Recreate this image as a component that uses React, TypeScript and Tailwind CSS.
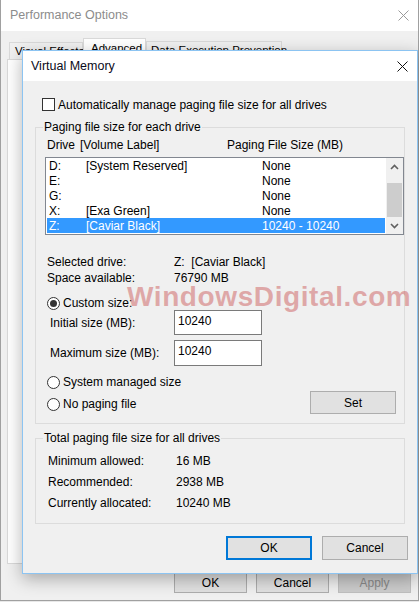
import React from "react";

const F = { fontFamily: '"Liberation Sans", Arial, sans-serif' };

function XIcon({ color }: { color: string }) {
  return (
    <svg width="11" height="11" viewBox="0 0 11 11">
      <path d="M0.5 0.5 L10.5 10.5 M10.5 0.5 L0.5 10.5" stroke={color} strokeWidth="1" fill="none" />
    </svg>
  );
}

function Radio({ checked }: { checked?: boolean }) {
  return (
    <span className="w-[13px] h-[13px] rounded-full border border-[#333] bg-white flex items-center justify-center shrink-0">
      {checked && <span className="w-[7px] h-[7px] rounded-full bg-[#333]" />}
    </span>
  );
}

function Chevron({ up }: { up?: boolean }) {
  return (
    <svg width="9" height="6" viewBox="0 0 9 6">
      <path d={up ? "M1 5 L4.5 1.5 L8 5" : "M1 1 L4.5 4.5 L8 1"} stroke="#606060" strokeWidth="1.6" fill="none" />
    </svg>
  );
}

const rows = [
  { d: "D:", l: "[System Reserved]", s: "None" },
  { d: "E:", l: "", s: "None" },
  { d: "G:", l: "", s: "None" },
  { d: "X:", l: "[Exa Green]", s: "None" },
  { d: "Z:", l: "[Caviar Black]", s: "10240 - 10240", sel: true },
];

export default function App() {
  return (
    <div className="relative w-[419px] h-[602px] overflow-hidden bg-[#e8e8e8] text-[12px] text-black" style={F}>
      {/* Outer window */}
      <div className="w-[419px] h-[601px] border-l border-r border-b border-[#a0a0a0] bg-[#f0f0f0] flex flex-col">
        <div className="h-[31px] bg-white flex items-center justify-between pl-[9px] pr-[9px] shrink-0">
          <span className="text-[#8c8c8c] text-[12.5px]">Performance Options</span>
          <XIcon color="#9a9a9a" />
        </div>
        <div className="flex items-end pl-[8px] pt-[7px] h-[28px] shrink-0 whitespace-nowrap text-[11.5px]">
          <div className="h-[17px] w-[74px] border border-b-0 border-[#d9d9d9] bg-[#f0f0f0] pl-[5px] leading-[16px]">Visual Effects</div>
          <div className="h-[21px] w-[63px] border border-b-0 border-[#d9d9d9] bg-white pl-[7px] leading-[18px]">Advanced</div>
          <div className="h-[18px] w-[136px] border border-b-0 border-[#d9d9d9] bg-[#f0f0f0] pl-[4px] leading-[16px]">Data Execution Prevention</div>
        </div>
        <div className="ml-[6px] mr-[6px] h-[505px] border border-[#d9d9d9] bg-white shrink-0" />
        <div className="flex justify-end gap-[9px] pr-[7px] mt-[8px]">
          <div className="w-[73px] h-[21px] border border-[#adadad] bg-[#e1e1e1] flex items-center justify-center">OK</div>
          <div className="w-[73px] h-[21px] border border-[#adadad] bg-[#e1e1e1] flex items-center justify-center">Cancel</div>
          <div className="w-[73px] h-[21px] border border-[#bfbfbf] bg-[#cccccc] text-[#8a8a8a] flex items-center justify-center">Apply</div>
        </div>
      </div>

      {/* Virtual Memory dialog */}
      <div className="absolute left-[22px] top-[50px] w-[396px] h-[524px] border border-[#8cc4f2] bg-[#f0f0f0] flex flex-col shadow-[0_5px_16px_rgba(0,0,0,0.3)]">
        <div className="h-[30px] bg-white flex items-center justify-between pl-[8px] pr-[9px] shrink-0">
          <span className="text-[12.5px] text-[#0a0a20]">Virtual Memory</span>
          <XIcon color="#111" />
        </div>
        <div className="px-[12px] flex flex-col">
          <div className="flex items-center mt-[17px] ml-[7px] h-[13px]">
            <span className="w-[13px] h-[13px] border border-[#333] bg-white shrink-0" />
            <span className="ml-[3px] leading-[14px]">Automatically manage paging file size for all drives</span>
          </div>

          {/* Group 1 */}
          <div className="mt-[16px] border border-[#dcdcdc] flex flex-col h-[297px]">
            <div className="-mt-[9px] ml-[7px] w-fit px-[1px] bg-[#f0f0f0] leading-[16px]">Paging file size for each drive</div>
            <div className="flex mt-[2px] pl-[11px] leading-[16px]">
              <span className="w-[33px]">Drive</span>
              <span className="w-[147px]">[Volume Label]</span>
              <span>Paging File Size (MB)</span>
            </div>
            <div className="mt-[4px] ml-[9px] w-[359px] h-[78px] border border-[#828790] bg-white flex">
              <div className="flex-1 pl-[1px] flex flex-col">
                {rows.map((r) => (
                  <div
                    key={r.d}
                    className={`h-[15px] flex items-center pl-[2px] ${r.sel ? "bg-[#3399ff] text-white" : ""}`}
                  >
                    <span className="w-[37px]">{r.d}</span>
                    <span className="w-[176px]">{r.l}</span>
                    <span>{r.s}</span>
                  </div>
                ))}
              </div>
              <div className="w-[17px] ml-[1px] bg-[#f0f0f0] flex flex-col">
                <div className="h-[17px] flex items-center justify-center"><Chevron up /></div>
                <div className="flex-1" />
                <div className="h-[34px] mx-[1px] bg-[#cdcdcd]" />
                <div className="h-[17px] flex items-center justify-center"><Chevron /></div>
              </div>
            </div>

            <div className="flex mt-[19px] pl-[11px] leading-[16px]">
              <span className="w-[127px]">Selected drive:</span>
              <span>Z:&nbsp;&nbsp;[Caviar Black]</span>
            </div>
            <div className="flex pl-[11px] leading-[16px]">
              <span className="w-[127px]">Space available:</span>
              <span>76790 MB</span>
            </div>
            <div className="flex items-center mt-[10px] pl-[11px] h-[14px]">
              <Radio checked />
              <span className="ml-[3px]">Custom size:</span>
            </div>
            <div className="flex items-center pl-[14px] h-[25px]">
              <span className="w-[124px]">Initial size (MB):</span>
              <div className="w-[88px] h-[25px] border border-[#7a7a7a] bg-white pl-[3px] pt-[2px] leading-[16px]">10240</div>
            </div>
            <div className="flex items-center pl-[14px] h-[26px] mt-[5px]">
              <span className="w-[124px]">Maximum size (MB):</span>
              <div className="w-[88px] h-[26px] border border-[#7a7a7a] bg-white pl-[3px] pt-[2px] leading-[16px]">10240</div>
            </div>
            <div className="flex items-center mt-[9px] pl-[11px] h-[14px]">
              <Radio />
              <span className="ml-[3px]">System managed size</span>
            </div>
            <div className="flex items-center justify-between mt-[2px] pl-[11px] pr-[8px] h-[23px]">
              <div className="flex items-center mt-[3px]">
                <Radio />
                <span className="ml-[3px]">No paging file</span>
              </div>
              <div className="w-[86px] h-[23px] border border-[#adadad] bg-[#e1e1e1] flex items-center justify-center">Set</div>
            </div>
          </div>

          {/* Group 2 */}
          <div className="mt-[14px] border border-[#dcdcdc] flex flex-col h-[86px]">
            <div className="-mt-[9px] ml-[7px] w-fit px-[1px] bg-[#f0f0f0] leading-[16px]">Total paging file size for all drives</div>
            <div className="flex flex-col mt-[4px] pl-[12px]">
              <div className="flex items-center h-[21px]">
                <span className="w-[128px]">Minimum allowed:</span>
                <span>16 MB</span>
              </div>
              <div className="flex items-center h-[21px]">
                <span className="w-[128px]">Recommended:</span>
                <span>2938 MB</span>
              </div>
              <div className="flex items-center h-[21px]">
                <span className="w-[128px]">Currently allocated:</span>
                <span>10240 MB</span>
              </div>
            </div>
          </div>
        </div>

        <div className="flex justify-end gap-[10px] pr-[9px] mt-[12px]">
          <div className="w-[86px] h-[24px] border-2 border-[#0078d7] bg-[#e1e1e1] flex items-center justify-center">OK</div>
          <div className="w-[86px] h-[24px] border border-[#adadad] bg-[#e1e1e1] flex items-center justify-center">Cancel</div>
        </div>
      </div>

      {/* Watermark */}
      <div
        className="absolute left-[127px] top-[280px] text-[28px] font-bold tracking-[0.6px] text-[rgba(205,95,95,0.5)] leading-[34px] pointer-events-none whitespace-nowrap"
        style={{ fontFamily: '"Liberation Sans", Arial, sans-serif' }}
      >
        WindowsDigital.com
      </div>
    </div>
  );
}
